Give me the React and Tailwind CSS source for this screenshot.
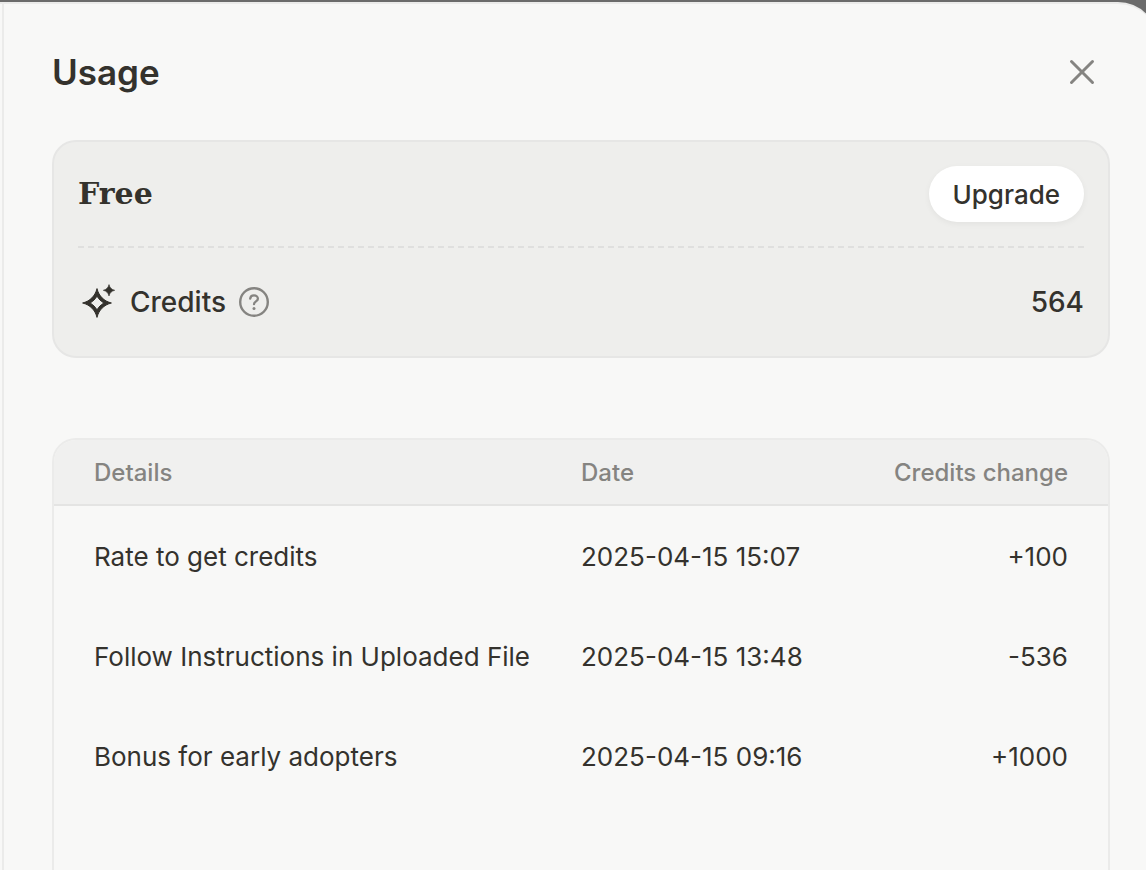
import React from 'react'
import { X } from 'lucide-react'

const HISTORY = [
  { details: 'Rate to get credits', date: '2025-04-15 15:07', change: '+100' },
  { details: 'Follow Instructions in Uploaded File', date: '2025-04-15 13:48', change: '-536' },
  { details: 'Bonus for early adopters', date: '2025-04-15 09:16', change: '+1000' }
]

function SparkleIcon() {
  return (
    <svg viewBox="0 0 40 40" className="size-10" fill="currentColor" aria-hidden="true">
      <path
        fillRule="evenodd"
        stroke="currentColor"
        strokeWidth="1"
        strokeLinejoin="round"
        d="M19 6.6 C20.8 14 26 19.2 33.4 21 C26 22.8 20.8 28 19 35.4 C17.2 28 12 22.8 4.6 21 C12 19.2 17.2 14 19 6.6 Z M19 14 C17.2 17.2 15.2 19.2 12 21 C15.2 22.8 17.2 24.8 19 28 C20.8 24.8 22.8 22.8 26 21 C22.8 19.2 20.8 17.2 19 14 Z"
      />
      <path
        stroke="currentColor"
        strokeWidth="0.6"
        strokeLinejoin="round"
        d="M31 2.6 C31.9 5.9 33.4 7.4 36.7 8.3 C33.4 9.2 31.9 10.7 31 14 C30.1 10.7 28.6 9.2 25.3 8.3 C28.6 7.4 30.1 5.9 31 2.6 Z"
      />
    </svg>
  )
}

function HelpIcon() {
  return (
    <svg viewBox="0 0 32 32" className="size-8" fill="none" stroke="currentColor" strokeLinecap="round" aria-hidden="true">
      <circle cx="16" cy="16" r="13.8" strokeWidth="2.4" />
      <path d="M12.2 12.6 C12.4 10.5 13.9 9.3 16 9.3 C18.2 9.3 19.9 10.7 19.9 12.7 C19.9 15.4 16 15.4 16 18.2" strokeWidth="2.3" />
      <circle cx="16" cy="22.4" r="1.5" fill="currentColor" stroke="none" />
    </svg>
  )
}

export default function App() {
  return (
    <div className="flex h-screen overflow-hidden bg-[#6b6b6b] pt-0.5 font-[Inter,sans-serif] text-[#34322d]">
      <div className="-mr-3 flex flex-1 rounded-tr-[40px] border-t-2 border-[#ebebea] bg-[#f8f8f7] pl-0.5">
        <main className="flex flex-1 flex-col border-l-2 border-[#ebebea] pt-10 pr-12 pl-12">
          <header className="flex items-center justify-between">
            <h1 className="text-[35px] leading-14 font-semibold">Usage</h1>
            <button aria-label="Close" className="flex size-14 items-center justify-center text-[#858481]">
              <X size={42} strokeWidth={1.7} />
            </button>
          </header>

          <section className="mt-10 rounded-3xl border-2 border-[#e6e6e5] bg-[#eeeeec] px-6">
            <div className="flex items-center justify-between border-b-2 border-dashed border-[#dfdfde] py-6">
              <h2 className="font-['DejaVu_Serif',serif] text-[30px] leading-10 font-bold">Free</h2>
              <button className="h-14 rounded-full bg-white px-6 text-[26px] font-medium shadow-[0_2px_6px_rgba(0,0,0,0.05)]">Upgrade</button>
            </div>
            <div className="flex h-27 items-center justify-between text-[28px] font-medium">
              <div className="flex items-center gap-3">
                <SparkleIcon />
                <span>Credits</span>
                <button aria-label="About credits" className="text-[#858481]"><HelpIcon /></button>
              </div>
              <span>564</span>
            </div>
          </section>

          <section className="mt-20 flex-1 overflow-hidden rounded-t-3xl border-2 border-b-0 border-[#ebebea]">
            <table className="w-full table-fixed border-separate border-spacing-0 text-left text-[26px]">
              <thead className="bg-[#f0f0ef] text-[24px] text-[#858481]">
                <tr className="h-[66px]">
                  <th className="w-1/2 border-b-2 border-[#e4e4e3] pt-0.5 pl-10 font-medium">Details</th>
                  <th className="border-b-2 border-[#e4e4e3] pt-0.5 font-medium">Date</th>
                  <th className="border-b-2 border-[#e4e4e3] pt-0.5 pr-10 text-right font-medium">Credits change</th>
                </tr>
              </thead>
              <tbody>
                {HISTORY.map(h => (
                  <tr key={h.date} className="h-25">
                    <td className="pl-10 whitespace-nowrap">{h.details}</td>
                    <td className="whitespace-nowrap">{h.date}</td>
                    <td className="pr-10 text-right">{h.change}</td>
                  </tr>
                ))}
              </tbody>
            </table>
          </section>
        </main>
      </div>
    </div>
  )
}
